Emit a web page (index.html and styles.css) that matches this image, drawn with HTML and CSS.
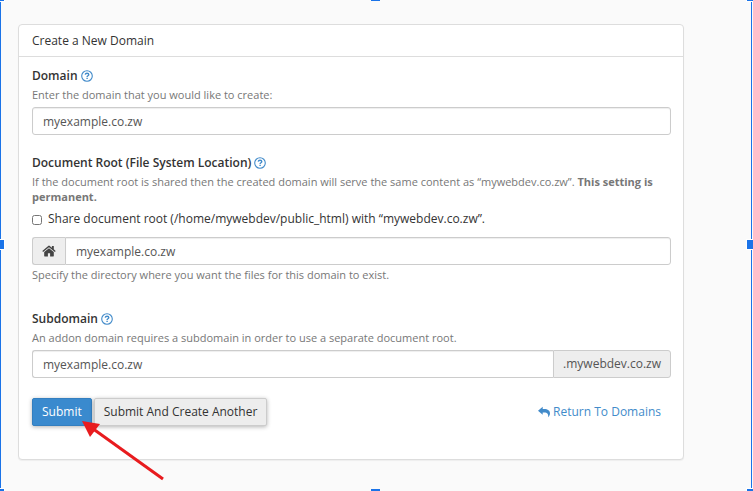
FILE: index.html
```html
<!DOCTYPE html>
<html lang="en">
<head>
  <meta charset="utf-8">
  <title>Create a New Domain</title>
  <link rel="stylesheet" href="styles.css">
</head>
<body>
  <svg class="sprite" aria-hidden="true">
    <symbol id="icon-help" viewBox="0 0 12 12">
      <circle cx="6" cy="6" r="5.3" fill="none" stroke="currentColor" stroke-width="1.1"/>
      <path d="M4.2 4.7C4.4 3.7 5.1 3.2 6 3.2c1.1 0 1.8.6 1.8 1.5C7.8 5.8 6.1 5.8 6.1 7" fill="none" stroke="currentColor" stroke-width="1.4"/>
      <path d="M5.4 7.8h1.4v1.3H5.4z" fill="currentColor"/>
    </symbol>
  </svg>

  <main class="panel">
    <h1 class="panel-heading">Create a New Domain</h1>
    <form class="panel-body">
      <section class="form-group">
        <div class="label-row">
          <label for="domain">Domain</label>
          <button type="button" class="help-button" aria-label="About domain"><svg class="icon"><use href="#icon-help"/></svg></button>
        </div>
        <p class="help">Enter the domain that you would like to create:</p>
        <input type="text" id="domain" class="form-control" value="myexample.co.zw">
      </section>

      <section class="form-group group-root">
        <div class="label-row">
          <label for="docroot">Document Root (File System Location)</label>
          <button type="button" class="help-button" aria-label="About document root"><svg class="icon"><use href="#icon-help"/></svg></button>
        </div>
        <p class="help">If the document root is shared then the created domain will serve the same content as “mywebdev.co.zw”. <strong>This setting is permanent.</strong></p>
        <div class="checkbox">
          <input type="checkbox" id="share">
          <label for="share">Share document root (/home/mywebdev/public_html) with “mywebdev.co.zw”.</label>
        </div>
        <div class="input-group">
          <span class="addon addon-home">
            <svg class="icon-home" viewBox="0 0 14 12" aria-hidden="true">
              <path d="M7 3.2 2.2 7v4.1c0 .3.2.5.5.5h3.200V8.3h2.200v3.3h3.200c.3 0 .5-.2.5-.5V7z"/>
              <path d="M13.700 5.900 11.800 4.300V.9H9.900v1.800L7.800.9a1.200 1.200 0 0 0-1.600 0L.3 5.900l.8 1L7 2.200l5.900 4.700z"/>
            </svg>
          </span>
          <input type="text" id="docroot" class="form-control" value="myexample.co.zw">
        </div>
        <p class="help">Specify the directory where you want the files for this domain to exist.</p>
      </section>

      <section class="form-group">
        <div class="label-row">
          <label for="subdomain">Subdomain</label>
          <button type="button" class="help-button" aria-label="About subdomain"><svg class="icon"><use href="#icon-help"/></svg></button>
        </div>
        <p class="help">An addon domain requires a subdomain in order to use a separate document root.</p>
        <div class="input-group">
          <input type="text" id="subdomain" class="form-control" value="myexample.co.zw">
          <span class="addon">.mywebdev.co.zw</span>
        </div>
      </section>

      <div class="actions">
        <button type="submit" class="btn btn-primary">Submit</button>
        <button type="submit" class="btn">Submit And Create Another</button>
        <a href="#" class="return-link">
          <svg class="icon-reply" viewBox="0 0 12 12" aria-hidden="true"><path d="M0 4.700 4.700.8v2.300h1.500C9.800 3.100 12 4.600 12 7.600c0 1.500-.8 2.900-1.900 3.700.6-2.800-.7-4.800-3.900-4.800H4.700v2.200z"/></svg>
          Return To Domains
        </a>
        <svg class="arrow" viewBox="0 0 84 62" aria-hidden="true">
          <path d="M12 8.500 81 58" stroke="#e81b1e" stroke-width="3"/>
          <path d="M0 0 18 3 8 16z" fill="#e81b1e"/>
        </svg>
      </div>
    </form>
  </main>

  <div class="selection" aria-hidden="true">
    <i class="handle top left"></i>
    <i class="handle top center"></i>
    <i class="handle top right"></i>
    <i class="handle middle left"></i>
    <i class="handle middle right"></i>
    <i class="handle bottom left"></i>
    <i class="handle bottom center"></i>
    <i class="handle bottom right"></i>
  </div>
</body>
</html>
```

FILE: styles.css
```css
* {
  box-sizing: border-box;
}
body {
  margin: 0;
  padding: 24px 69px 30px 18px;
  background: #fafafa;
  color: #333;
  font-family: "Open Sans", "Noto Sans", sans-serif;
  font-size: 12px;
  line-height: 18px;
}
.sprite {
  display: none;
}
.panel {
  background: #fff;
  border: 1px solid #ddd;
  border-radius: 4px;
  box-shadow: 0 1px 1px rgba(0, 0, 0, 0.05);
}
.panel-heading {
  margin: 0;
  padding: 7px 13px 6px;
  border-bottom: 1px solid #ddd;
  font-size: 12px;
  font-weight: 400;
}
.panel-body {
  padding: 10px 12px 33px 13px;
}
.form-group {
  margin-bottom: 19px;
}
.group-root {
  margin-bottom: 28px;
}
.label-row {
  display: flex;
  align-items: center;
  gap: 3px;
  font-weight: 600;
}
.help-button {
  display: flex;
  padding: 0;
  border: 0;
  background: none;
  color: #428bca;
}
.icon {
  width: 12px;
  height: 12px;
}
.help {
  margin: 2px 0 5px;
  color: #777;
  font-size: 11px;
  line-height: 15px;
}
.form-control {
  display: block;
  width: 100%;
  height: 28px;
  padding: 0 10px;
  border: 1px solid #ccc;
  border-radius: 3px;
  background: #fff;
  box-shadow: inset 0 1px 1px rgba(0, 0, 0, 0.07);
  color: #555;
  font: inherit;
}
.checkbox {
  display: flex;
  align-items: center;
  gap: 6px;
  margin: 6px 0 9px;
}
.checkbox input {
  width: 10px;
  height: 10px;
  margin: 2px 0 0;
}
.input-group {
  display: flex;
}
.input-group .form-control {
  flex: 1;
  min-width: 0;
}
.addon {
  display: flex;
  align-items: center;
  padding: 0 9px;
  border: 1px solid #ccc;
  border-radius: 3px;
  background: #eee;
  color: #555;
}
.addon:first-child {
  border-right: 0;
  border-top-right-radius: 0;
  border-bottom-right-radius: 0;
}
.input-group .form-control:first-child {
  border-right: 0;
  border-top-right-radius: 0;
  border-bottom-right-radius: 0;
}
.addon:last-child,
.addon + .form-control {
  border-top-left-radius: 0;
  border-bottom-left-radius: 0;
}
.icon-home {
  width: 14px;
  height: 12px;
  fill: #444;
}
.actions {
  position: relative;
  display: flex;
  align-items: center;
  gap: 2px;
  margin-top: 20px;
}
.btn {
  height: 28px;
  padding: 0 9px;
  border: 1px solid #ccc;
  border-radius: 2px;
  background: #ededed;
  box-shadow: 0 1px 4px rgba(0, 0, 0, 0.3);
  color: #333;
  font: inherit;
}
.btn-primary {
  border-color: #337fc0;
  background: #3a8ace;
  color: #fff;
}
.return-link {
  display: flex;
  align-items: center;
  gap: 3px;
  margin-left: auto;
  padding-right: 10px;
  color: #428bca;
  text-decoration: none;
}
.icon-reply {
  width: 12px;
  height: 12px;
  fill: currentColor;
}
.arrow {
  position: absolute;
  top: 23px;
  left: 50px;
  width: 84px;
  height: 62px;
}

/* selection frame over the page */
.selection {
  position: absolute;
  inset: 0 1px 0 0;
  border: solid #1a73e8;
  border-width: 0 1px;
  pointer-events: none;
}
.handle {
  position: absolute;
  width: 9px;
  height: 9px;
  background: #1a73e8;
  outline: 1px solid #fff;
}
.top {
  top: 0;
  height: 1px;
}
.middle {
  top: 240px;
}
.bottom {
  bottom: 0;
  height: 2px;
}
.left {
  left: -1px;
  width: 4px;
}
.center {
  left: calc(50% - 5px);
  outline: 0;
}
.right {
  right: -2px;
  width: 6px;
}
```
